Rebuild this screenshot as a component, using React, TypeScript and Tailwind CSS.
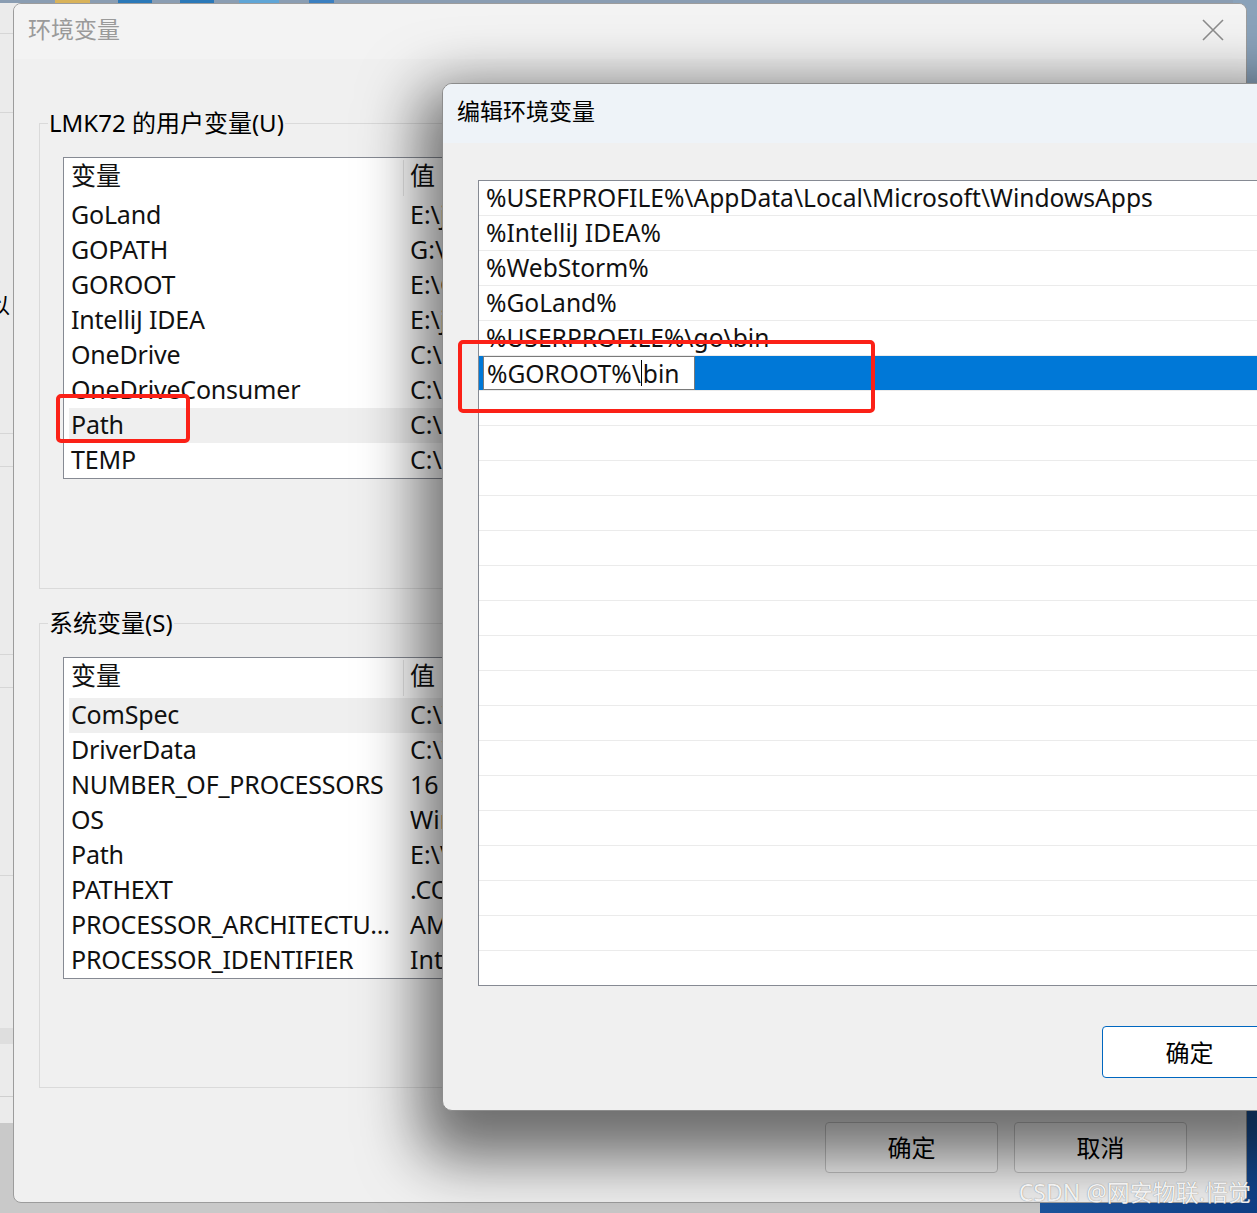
import React from 'react';

const userVars: [string, string][] = [
  ['GoLand', 'E:\\jetbrains\\GoLand 2023.1\\bin;'],
  ['GOPATH', 'G:\\gopath'],
  ['GOROOT', 'E:\\Go'],
  ['IntelliJ IDEA', 'E:\\jetbrains\\IntelliJ IDEA 2023.1\\bin;'],
  ['OneDrive', 'C:\\Users\\LMK72\\OneDrive'],
  ['OneDriveConsumer', 'C:\\Users\\LMK72\\OneDrive'],
  ['Path', 'C:\\Users\\LMK72\\AppData\\Local\\Microsoft\\WindowsApps;'],
  ['TEMP', 'C:\\Users\\LMK72\\AppData\\Local\\Temp'],
];

const sysVars: [string, string][] = [
  ['ComSpec', 'C:\\WINDOWS\\system32\\cmd.exe'],
  ['DriverData', 'C:\\Windows\\System32\\Drivers\\DriverData'],
  ['NUMBER_OF_PROCESSORS', '16'],
  ['OS', 'Windows_NT'],
  ['Path', 'E:\\VMware\\bin\\;C:\\WINDOWS\\system32'],
  ['PATHEXT', '.COM;.EXE;.BAT;.CMD;.VBS'],
  ['PROCESSOR_ARCHITECTU...', 'AMD64'],
  ['PROCESSOR_IDENTIFIER', 'Intel64 Family 6 Model 154'],
];

const pathEntries = [
  '%USERPROFILE%\\AppData\\Local\\Microsoft\\WindowsApps',
  '%IntelliJ IDEA%',
  '%WebStorm%',
  '%GoLand%',
  '%USERPROFILE%\\go\\bin',
];

function VarList({ rows, selected }: { rows: [string, string][]; selected: number }) {
  return (
    <div className="ml-[23px] h-[322px] w-[1150px] overflow-hidden border border-[#868a93] bg-white pl-[5px]">
      <div className="flex h-[40px] items-center">
        <div className="w-[334px] pl-[2px] pb-[5px]">变量</div>
        <div className="h-[36px] w-px bg-[#e6e6e6]" />
        <div className="pl-[6px] pb-[5px]">值</div>
      </div>
      {rows.map(([name, value], i) => (
        <div
          key={name}
          className={`flex h-[35px] items-center whitespace-nowrap pb-[2px] ${i === selected ? 'bg-[#efefef]' : ''}`}
        >
          <div className="w-[334px] pl-[2px] tracking-[-0.2px]">{name}</div>
          <div className="pl-[7px]">{value}</div>
        </div>
      ))}
    </div>
  );
}

function GroupBox({ title, children, className }: { title: string; children: React.ReactNode; className: string }) {
  return (
    <fieldset className={`mx-[25px] border border-[#dadada] px-0 ${className}`}>
      <legend className="ml-[8px] px-[1px] text-[24px] leading-[32px] text-black">{title}</legend>
      {children}
    </fieldset>
  );
}

export default function App() {
  const emptyRows = Array.from({ length: 17 });

  return (
    <div className="relative h-[1213px] w-[1257px] overflow-hidden bg-[#c9c9c9] font-['Noto_Sans','Noto_Sans_CJK_SC',sans-serif] text-[25px] leading-[35px] text-[#111]">
      {/* desktop behind */}
      <div className="absolute left-0 top-0 flex h-[10px] w-full bg-[#8a9db2]">
        <div className="w-[55px]" />
        <div className="w-[35px] bg-[#d9b35a]" />
        <div className="w-[28px]" />
        <div className="w-[34px] bg-[#2a78b8]" />
        <div className="w-[28px]" />
        <div className="w-[34px] bg-[#2a78b8]" />
        <div className="w-[25px]" />
        <div className="w-[40px] bg-[#5fa5d6]" />
        <div className="w-[30px]" />
        <div className="w-[25px] bg-[#3b7fc0]" />
      </div>
      <div className="absolute right-0 top-0 h-[1120px] w-[24px] bg-[#8aa2ba]" />
      <div className="absolute bottom-0 left-[1040px] right-0 top-[1100px] bg-gradient-to-br from-[#2a6cb5] to-[#0f3f86]" />
      <div className="absolute left-0 top-[3px] flex h-[1120px] w-[40px] flex-col bg-[#ebebeb]">
        <div className="mt-[30px] h-px bg-[#d6d6d6]" />
        <div className="mt-[78px] h-px bg-[#d6d6d6]" />
        <div className="mt-[176px] text-[22px] leading-[30px] text-black">
          <span className="-ml-[12px]">以</span>
        </div>
        <div className="mt-[114px] h-px bg-[#d6d6d6]" />
        <div className="mt-[32px] h-px bg-[#d6d6d6]" />
        <div className="mt-[187px] h-px bg-[#d6d6d6]" />
        <div className="mt-[32px] h-px bg-[#d6d6d6]" />
        <div className="mt-[187px] h-px bg-[#d6d6d6]" />
        <div className="mt-[152px] h-[16px] bg-[#dedede]" />
        <div className="mt-[52px] h-px bg-[#cfcfcf]" />
      </div>

      {/* main dialog: 环境变量 */}
      <div className="absolute left-[13px] top-[3px] flex h-[1200px] w-[1234px] flex-col overflow-hidden rounded-[8px] border border-[#9c9c9c] bg-[#f0f0f0]">
        <div className="flex h-[55px] shrink-0 items-center justify-between bg-[#f3f3f3] pb-[6px] pl-[14px] pr-[22px]">
          <span className="text-[23px] leading-[30px] text-[#9a9a9a]">环境变量</span>
          <svg width="22" height="22" viewBox="0 0 22 22" className="mt-[3px]">
            <path d="M1 1 L21 21 M21 1 L1 21" stroke="#8c8c8c" strokeWidth="1.6" fill="none" />
          </svg>
        </div>

        <GroupBox title="LMK72 的用户变量(U)" className="mt-[48px] pt-[18px] pb-[109px]">
          <VarList rows={userVars} selected={6} />
        </GroupBox>

        <GroupBox title="系统变量(S)" className="mt-[18px] pt-[18px] pb-[108px]">
          <VarList rows={sysVars} selected={0} />
        </GroupBox>

        <div className="mt-[34px] flex justify-end gap-[16px] pr-[59px]">
          <button className="h-[51px] w-[173px] rounded-[4px] border border-[#c4c4c4] bg-[#f6f6f6] text-[24px] text-black">
            确定
          </button>
          <button className="h-[51px] w-[173px] rounded-[4px] border border-[#c4c4c4] bg-[#f6f6f6] text-[24px] text-black">
            取消
          </button>
        </div>
      </div>

      {/* edit dialog: 编辑环境变量 */}
      <div className="absolute left-[442px] top-[83px] flex h-[1028px] w-[840px] flex-col overflow-hidden rounded-l-[10px] border border-[#8c8c8c] bg-[#f0f0f0] shadow-[0_26px_60px_22px_rgba(0,0,0,0.55)]">
        <div className="flex h-[59px] shrink-0 items-center bg-[#eef3f8] pb-[6px] pl-[14px]">
          <span className="text-[23px] leading-[30px] text-black">编辑环境变量</span>
        </div>
        <div className="ml-[35px] mt-[37px] h-[806px] overflow-hidden border border-[#868a93] bg-white text-[24.6px]">
          {pathEntries.map((p) => (
            <div key={p} className="flex h-[35px] items-center whitespace-nowrap border-b border-[#ebebeb] pb-[1px] pl-[7px]">
              {p}
            </div>
          ))}
          <div className="flex h-[35px] items-center border-b border-[#ebebeb] bg-[#0078d7]">
            <div className="ml-[4px] flex h-[34px] w-[212px] items-center whitespace-nowrap border border-[#7a7a7a] bg-white pl-[3px]">
              %GOROOT%\<span className="mx-[0.5px] h-[26px] w-px bg-black" />bin
            </div>
          </div>
          {emptyRows.map((_, i) => (
            <div key={i} className="h-[35px] border-b border-[#ebebeb]" />
          ))}
        </div>
        <div className="mt-[40px] flex pl-[659px]">
          <button className="h-[52px] w-[175px] rounded-[4px] border border-[#0067c0] bg-white text-[24px] text-black">
            确定
          </button>
        </div>
      </div>

      {/* red highlight boxes */}
      <div className="absolute left-[56px] top-[394px] h-[49px] w-[134px] rounded-[5px] border-[4px] border-[#fb2117]" />
      <div className="absolute left-[458px] top-[340px] h-[73px] w-[417px] rounded-[5px] border-[4px] border-[#fb2117]" />

      {/* watermark */}
      <div className="absolute bottom-[6px] right-[6px] text-[23px] leading-[30px] text-white/90 [text-shadow:0_0_1px_rgba(90,90,90,0.9)]">
        CSDN @网安物联.悟觉
      </div>
    </div>
  );
}
